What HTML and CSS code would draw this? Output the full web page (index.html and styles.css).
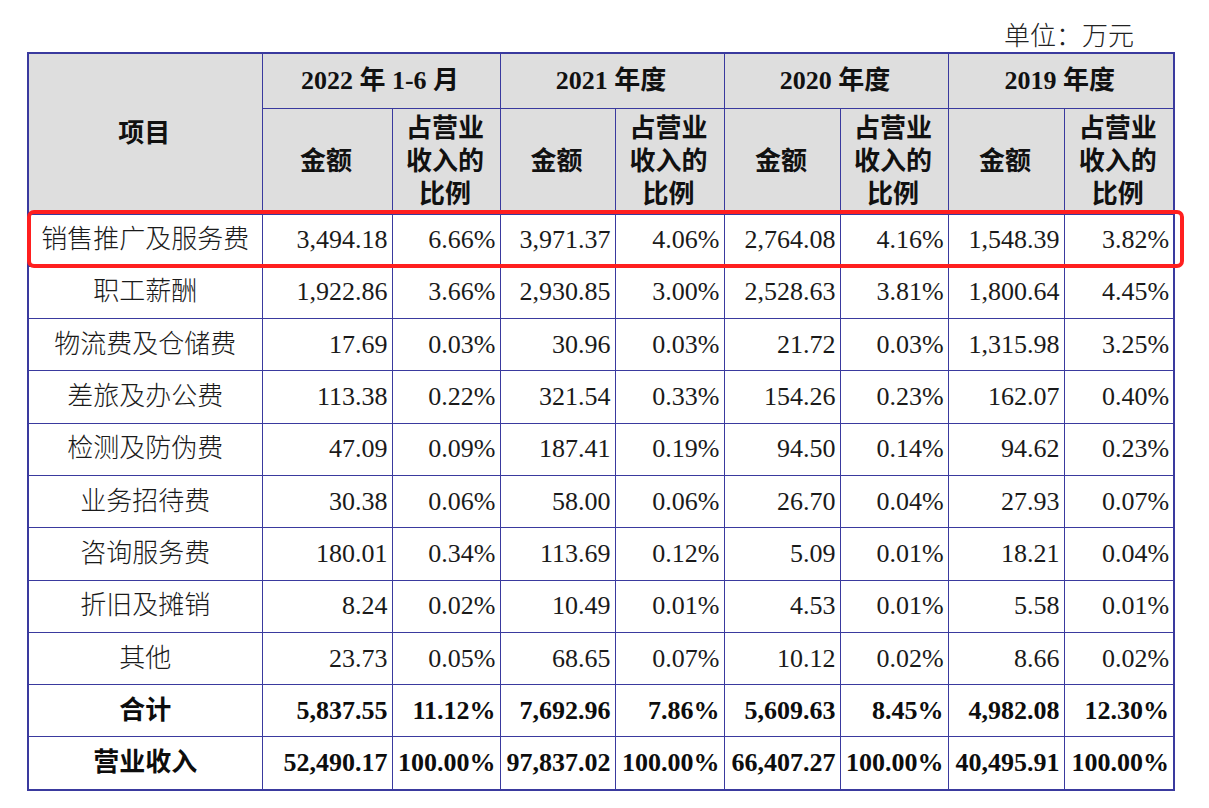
FILE: index.html
```html
<!DOCTYPE html>
<html lang="zh-CN">
<head>
<meta charset="utf-8">
<title>销售费用明细</title>
<link rel="stylesheet" href="styles.css">
</head>
<body>
<div class="page">
  <div class="unit">单位：万元</div>
  <div class="table-wrap">
    <table class="fin">
      <colgroup>
        <col class="c-item"><col class="c-a1"><col class="c-p1"><col class="c-a2"><col class="c-p2"><col class="c-a3"><col class="c-p3"><col class="c-a4"><col class="c-p4">
      </colgroup>
      <thead>
        <tr class="h1">
          <th rowspan="2">项目</th>
          <th colspan="2">2022 年 1-6 月</th>
          <th colspan="2">2021 年度</th>
          <th colspan="2">2020 年度</th>
          <th colspan="2">2019 年度</th>
        </tr>
        <tr class="h2">
          <th>金额</th><th>占营业<br>收入的<br>比例</th>
          <th>金额</th><th>占营业<br>收入的<br>比例</th>
          <th>金额</th><th>占营业<br>收入的<br>比例</th>
          <th>金额</th><th>占营业<br>收入的<br>比例</th>
        </tr>
      </thead>
      <tbody>
        <tr><td class="label">销售推广及服务费</td><td>3,494.18</td><td>6.66%</td><td>3,971.37</td><td>4.06%</td><td>2,764.08</td><td>4.16%</td><td>1,548.39</td><td>3.82%</td></tr>
        <tr><td class="label">职工薪酬</td><td>1,922.86</td><td>3.66%</td><td>2,930.85</td><td>3.00%</td><td>2,528.63</td><td>3.81%</td><td>1,800.64</td><td>4.45%</td></tr>
        <tr><td class="label">物流费及仓储费</td><td>17.69</td><td>0.03%</td><td>30.96</td><td>0.03%</td><td>21.72</td><td>0.03%</td><td>1,315.98</td><td>3.25%</td></tr>
        <tr><td class="label">差旅及办公费</td><td>113.38</td><td>0.22%</td><td>321.54</td><td>0.33%</td><td>154.26</td><td>0.23%</td><td>162.07</td><td>0.40%</td></tr>
        <tr><td class="label">检测及防伪费</td><td>47.09</td><td>0.09%</td><td>187.41</td><td>0.19%</td><td>94.50</td><td>0.14%</td><td>94.62</td><td>0.23%</td></tr>
        <tr><td class="label">业务招待费</td><td>30.38</td><td>0.06%</td><td>58.00</td><td>0.06%</td><td>26.70</td><td>0.04%</td><td>27.93</td><td>0.07%</td></tr>
        <tr><td class="label">咨询服务费</td><td>180.01</td><td>0.34%</td><td>113.69</td><td>0.12%</td><td>5.09</td><td>0.01%</td><td>18.21</td><td>0.04%</td></tr>
        <tr><td class="label">折旧及摊销</td><td>8.24</td><td>0.02%</td><td>10.49</td><td>0.01%</td><td>4.53</td><td>0.01%</td><td>5.58</td><td>0.01%</td></tr>
        <tr><td class="label">其他</td><td>23.73</td><td>0.05%</td><td>68.65</td><td>0.07%</td><td>10.12</td><td>0.02%</td><td>8.66</td><td>0.02%</td></tr>
        <tr class="total"><td class="label">合计</td><td>5,837.55</td><td>11.12%</td><td>7,692.96</td><td>7.86%</td><td>5,609.63</td><td>8.45%</td><td>4,982.08</td><td>12.30%</td></tr>
        <tr class="total"><td class="label">营业收入</td><td>52,490.17</td><td>100.00%</td><td>97,837.02</td><td>100.00%</td><td>66,407.27</td><td>100.00%</td><td>40,495.91</td><td>100.00%</td></tr>
      </tbody>
    </table>
    <div class="highlight"></div>
  </div>
</div>
</body>
</html>
```

FILE: styles.css
```css
html, body {
  margin: 0;
  padding: 0;
  background: #ffffff;
}

.page {
  width: 1209px;
  height: 808px;
  position: relative;
  font-family: "Liberation Serif", "Noto Sans CJK SC", serif;
  color: #1a1a1a;
}

.unit {
  height: 52px;
  box-sizing: border-box;
  padding-top: 14px;
  padding-right: 75px;
  display: flex;
  align-items: center;
  justify-content: flex-end;
  font-size: 26px;
  font-weight: 300;
  color: #222;
}

.table-wrap {
  position: relative;
  padding-left: 27px;
}

.fin {
  border-collapse: collapse;
  table-layout: fixed;
  width: 1147px;
  border: 2px solid #3a3a9e;
}

.c-item { width: 234px; }
.c-a1 { width: 130px; }
.c-p1 { width: 108px; }
.c-a2 { width: 115px; }
.c-p2 { width: 109px; }
.c-a3 { width: 116px; }
.c-p3 { width: 108px; }
.c-a4 { width: 116px; }
.c-p4 { width: 110px; }

.fin th,
.fin td {
  border: 1px solid #3a3a9e;
  padding: 0 4px 0 2px;
  font-size: 26px;
  white-space: nowrap;
  overflow: visible;
}

.fin th {
  background: #dedede;
  font-weight: 700;
  text-align: center;
  vertical-align: middle;
  color: #111;
  line-height: 33px;
}

.h1 { height: 55px; }
.h2 { height: 106px; }

.fin td {
  height: 51.3px;
  text-align: right;
  vertical-align: middle;
  line-height: 30px;
  font-weight: 400;
}

.fin td.label {
  text-align: center;
  font-weight: 300;
  padding: 0 2px;
}

.fin tr.total td {
  font-weight: 700;
  color: #0d0d0d;
}

.fin tr.total td.label {
  font-weight: 700;
}

.highlight {
  position: absolute;
  left: 27px;
  top: 158px;
  width: 1157px;
  height: 58px;
  box-sizing: border-box;
  border: 4px solid #ff1f1f;
  border-radius: 7px;
  pointer-events: none;
}
```
